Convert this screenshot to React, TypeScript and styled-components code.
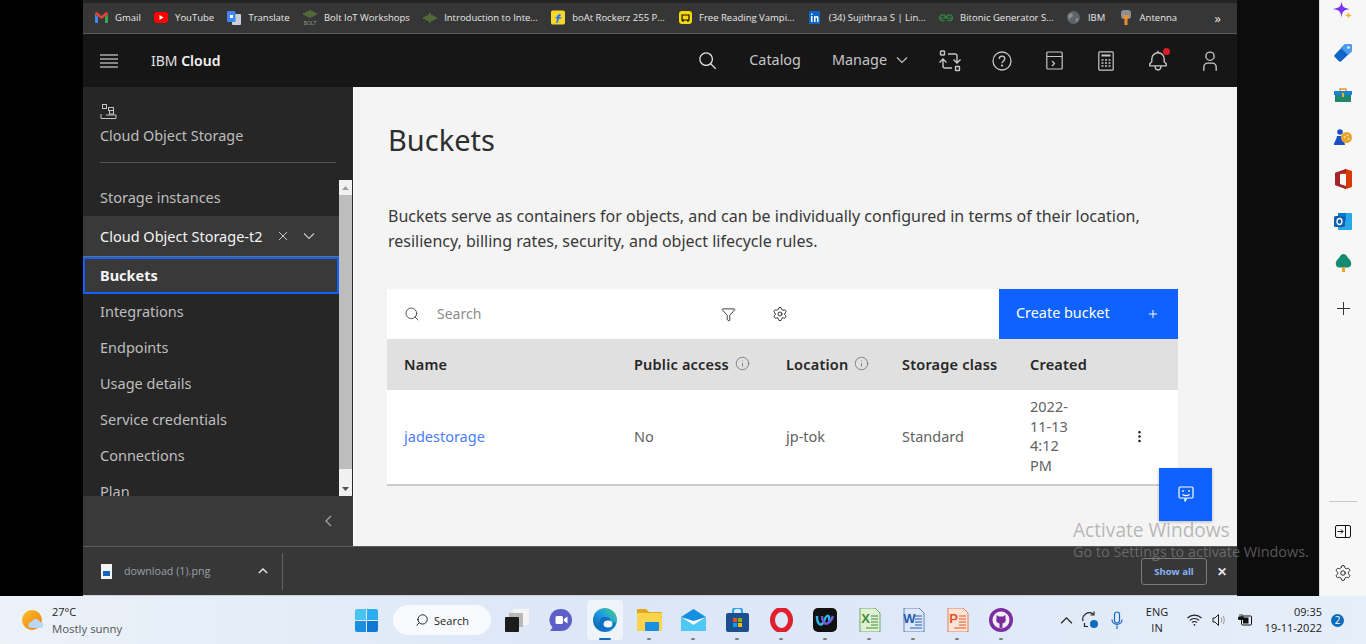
import React from "react";
import styled, { createGlobalStyle } from "styled-components";
import { Filter, Settings, Info, MoreVertical, Search as SearchGlyph } from "lucide-react";

const GlobalStyle = createGlobalStyle`
    html, body {
        margin: 0;
        padding: 0;
        background: #000;
        overflow: hidden;
    }
    * { box-sizing: border-box; }
`;

const PLEX = `"Noto Sans", "Open Sans", sans-serif`;
const SEGOE = `"Open Sans", "Noto Sans", sans-serif`;

/* ---------- carbon style glyphs ---------- */
const Carbon = ({ size = 20, color = "currentColor", d }: { size?: number; color?: string; d: string }) => (
    <svg width={size} height={size} viewBox="0 0 32 32" fill={color}>
        <path d={d} />
    </svg>
);
const SEARCH = "M29 27.59l-7.55-7.55a11 11 0 1 0-1.41 1.41L27.59 29ZM4 13a9 9 0 1 1 9 9A9 9 0 0 1 4 13Z";
const BELL = "M28.71 19.29 26 16.59V13a10 10 0 0 0-9-9.95V1h-2v2.05A10 10 0 0 0 6 13v3.59l-2.71 2.7A1 1 0 0 0 3 20v3a1 1 0 0 0 1 1h7v.78a5.15 5.15 0 0 0 4.5 5.2A5 5 0 0 0 21 25v-1h7a1 1 0 0 0 1-1v-3a1 1 0 0 0-.29-.71ZM19 25a3 3 0 0 1-6 0v-1h6Zm8-3H5v-1.59l2.71-2.7A1 1 0 0 0 8 17v-4a8 8 0 0 1 16 0v4a1 1 0 0 0 .29.71L27 20.41Z";
const USER = "M16 4a5 5 0 1 1-5 5 5 5 0 0 1 5-5m0-2a7 7 0 1 0 7 7 7 7 0 0 0-7-7ZM26 30h-2v-5a5 5 0 0 0-5-5h-6a5 5 0 0 0-5 5v5H6v-5a7 7 0 0 1 7-7h6a7 7 0 0 1 7 7Z";

const Hamburger = () => (
    <svg width="18" height="14" viewBox="0 0 18 14" stroke="#f4f4f4" strokeWidth="1.2">
        <path d="M0 1h18M0 5h18M0 9h18M0 13h18" />
    </svg>
);
const Chevron = ({ size = 12, up = false, color = "#c6c6c6", weight = 1.1 }: { size?: number; up?: boolean; color?: string; weight?: number }) => (
    <svg width={size} height={size} viewBox="0 0 12 12" fill="none" stroke={color} strokeWidth={weight}>
        <path d={up ? "M1 8.5 6 3.5l5 5" : "M1 3.5 6 8.5l5-5"} />
    </svg>
);
const SwitchIcon = () => (
    <svg width="22" height="22" viewBox="0 0 22 22" fill="none" stroke="#c6c6c6" strokeWidth="1.4">
        <rect x="1.5" y="1" width="4" height="4" rx=".6" />
        <rect x="16.5" y="16.5" width="4" height="4" rx=".6" />
        <path d="M9 4h7a2 2 0 0 1 2 2v6M14.5 9.5 18 13l3.5-3.5" />
        <path d="M13 18H6a2 2 0 0 1-2-2v-6M.5 12.5 4 9l3.5 3.5" />
    </svg>
);
const HelpIcon = () => (
    <svg width="20" height="20" viewBox="0 0 20 20" fill="none" stroke="#c6c6c6" strokeWidth="1.3">
        <circle cx="10" cy="10" r="9" />
        <path d="M7.2 8c0-1.7 1.2-2.8 2.8-2.8s2.8 1 2.8 2.5c0 2.2-2.8 2.3-2.8 4.6" />
        <circle cx="10" cy="14.6" r=".5" fill="#c6c6c6" />
    </svg>
);
const TerminalIcon = () => (
    <svg width="17" height="19" viewBox="0 0 17 19" fill="none" stroke="#c6c6c6" strokeWidth="1.2">
        <rect x=".8" y="1" width="15.4" height="17" rx="1" />
        <path d="M1 5.5h15M6 10l2.5 2.5L6 15" />
    </svg>
);
const CalculatorIcon = () => (
    <svg width="16" height="20" viewBox="0 0 16 20" fill="none" stroke="#c6c6c6" strokeWidth="1.2">
        <rect x=".8" y=".8" width="14.4" height="18.4" rx="1" />
        <path d="M3.5 4.5h9" strokeWidth="2" />
        <path d="M3.5 9h2M7 9h2M10.5 9h2M3.5 12h2M7 12h2M10.5 12h2M3.5 15h2M7 15h2M10.5 15h2" strokeWidth="1.4" />
    </svg>
);
const StorageIcon = () => (
    <svg width="17" height="16" viewBox="0 0 17 16" fill="none" stroke="#c6c6c6" strokeWidth="1" style={{ display: "block" }}>
        <rect x="2.5" y=".5" width="4" height="4" />
        <rect x="8.5" y="3.5" width="5" height="3" />
        <rect x="9.5" y="6.5" width="4" height="3.5" />
        <path d="M1 10v4.5h15V11H6" />
    </svg>
);
const FeedbackIcon = () => (
    <svg width="16" height="18" viewBox="0 0 16 18" fill="none" stroke="#fff" strokeWidth="1.2">
        <path d="M2 1h12a1.2 1.2 0 0 1 1 1v9a1.2 1.2 0 0 1-1 1H9l-1 1.5-1 2V12H2a1.2 1.2 0 0 1-1-1V2a1.2 1.2 0 0 1 1-1Z" />
        <path d="M5 4v2M11 4v2M4.5 8.5c2 1.4 5 1.4 7 0" />
    </svg>
);

/* ---------- bookmark favicons ---------- */
const GmailFav = () => (
    <svg width="13" height="11" viewBox="0 0 13 11">
        <path d="M0 2v8a1 1 0 0 0 1 1h2V5Z" fill="#4285f4" />
        <path d="M13 2v8a1 1 0 0 1-1 1h-2V5Z" fill="#34a853" />
        <path d="M0 2c0-1.6 1.5-2.3 2.6-1.4L6.5 4l3.9-3.4C11.5-.3 13 .4 13 2l-6.5 5Z" fill="#ea4335" />
    </svg>
);
const YoutubeFav = () => (
    <svg width="14" height="11" viewBox="0 0 14 11">
        <rect width="14" height="11" rx="3" fill="#f00" />
        <path d="m5.5 3 4 2.5-4 2.5Z" fill="#fff" />
    </svg>
);
const TranslateFav = () => (
    <svg width="14" height="14" viewBox="0 0 14 14">
        <rect x="5" y="3" width="9" height="11" rx="1" fill="#c8d0dc" />
        <rect width="8.5" height="11" rx="1" fill="#4285f4" />
        <rect x="3" y="4" width="3" height="3" fill="#fff" />
    </svg>
);
const WaveFav = () => (
    <svg width="14" height="10" viewBox="0 0 14 10" stroke="#6f9a3c" strokeWidth="1">
        <path d="M1 4v2M3 3v4M5 2v6M7 0v10M9 2v6M11 3v4M13 4v2" />
    </svg>
);
const BoltFav = () => (
    <svg width="14" height="15" viewBox="0 0 14 15">
        <path d="M1 3v2M3 2v4M5 1v6M7 0v8M9 1v6M11 2v4M13 3v2" stroke="#6f9a3c" strokeWidth="1" />
        <text x="7" y="14.5" textAnchor="middle" fontSize="5" fontFamily="Open Sans, sans-serif" fill="#9a9a9a">BOLT</text>
    </svg>
);
const FlipkartFav = () => (
    <svg width="15" height="15" viewBox="0 0 15 15">
        <rect width="15" height="15" rx="2" fill="#f8d72a" />
        <path d="M9 4C7 4 6.5 5.5 6.5 7H5v1.5h1.500L5.500 13h2l1-4.500H11V7H9c0-1 .5-1.500 1.500-1.500V4Z" fill="#2874f0" />
    </svg>
);
const ReadingFav = () => (
    <svg width="13" height="13" viewBox="0 0 13 13">
        <rect width="13" height="13" rx="3" fill="#f5d90a" />
        <path d="M3 4h7v5H3ZM3 10h2M8 10h2" stroke="#111" strokeWidth="1.2" fill="none" />
    </svg>
);
const LinkedinFav = () => (
    <svg width="11" height="13" viewBox="0 0 11 13">
        <rect width="11" height="13" fill="#0a66c2" />
        <path d="M2 5h1.500v6H2ZM2 2.500h1.500V4H2ZM5 5h1.500v1c1-1.500 3-1.200 3 1v4H8V7.500c0-1.300-1.500-1.300-1.500 0V11H5Z" fill="#fff" />
    </svg>
);
const GfgFav = () => (
    <svg width="14" height="8" viewBox="0 0 14 8" fill="none" stroke="#2f8d46" strokeWidth="1.2">
        <path d="M1 4h5.500A3 3 0 1 0 5.500 6M13 4H7.500A3 3 0 1 1 8.500 6" />
    </svg>
);
const GlobeFav = () => (
    <svg width="13" height="13" viewBox="0 0 13 13">
        <circle cx="6.500" cy="6.500" r="6.500" fill="#5f6368" />
        <path d="M3 2c2 0 3 1 3 2.500S3.500 6 3 8 1.500 6 1 5ZM9 7l2.500.5c0 2-1.500 3.500-3 4Z" fill="#8a8d91" />
    </svg>
);
const AntennaFav = () => (
    <svg width="12" height="15" viewBox="0 0 12 15">
        <rect x="1" y="0" width="10" height="9" rx="3" fill="#8a8f98" />
        <path d="M3 5h6v3H7.500v7h-3V8H3Z" fill="#e8912d" />
    </svg>
);

/* ---------- taskbar icons ---------- */
const WeatherIcon = () => (
    <svg width="23" height="23" viewBox="0 0 23 23">
        <defs>
            <linearGradient id="sun" x1="0" y1="0" x2="1" y2="1">
                <stop offset="0" stopColor="#fbbf24" />
                <stop offset="1" stopColor="#f07a14" />
            </linearGradient>
        </defs>
        <circle cx="10" cy="11" r="10" fill="url(#sun)" />
        <path d="M9 19a3 3 0 0 1 .5-6 4.500 4.500 0 0 1 8.500 0 3 3 0 0 1 .5 6Z" fill="#bcd6f2" />
    </svg>
);
const WinLogo = () => (
    <svg width="23" height="23" viewBox="0 0 23 23">
        <path d="M0 2a2 2 0 0 1 2-2h9v11H0Z" fill="#4cc2f1" />
        <path d="M12 0h9a2 2 0 0 1 2 2v9H12Z" fill="#2aaef0" />
        <path d="M0 12h11v11H2a2 2 0 0 1-2-2Z" fill="#1b8fe0" />
        <path d="M12 12h11v9a2 2 0 0 1-2 2h-9Z" fill="#0f78d4" />
    </svg>
);
const TaskView = () => (
    <svg width="24" height="23" viewBox="0 0 24 23">
        <rect x="8" y="0" width="16" height="16" rx="1" fill="#f4f4f4" />
        <rect x="4" y="4" width="14" height="14" fill="#b8b8b8" />
        <rect x="0" y="8" width="14" height="15" rx="1" fill="#1c1c1c" />
    </svg>
);
const TeamsIcon = () => (
    <svg width="24" height="24" viewBox="0 0 24 24">
        <path d="M12 1a11 11 0 0 1 0 22H1l2.500-3.500A11 11 0 0 1 12 1Z" fill="#5b5fc7" />
        <rect x="6.500" y="8" width="7.500" height="8" rx="1.500" fill="#fff" />
        <path d="m15 11 3.500-2.500v7L15 13Z" fill="#fff" />
    </svg>
);
const EdgeIcon = () => (
    <svg width="24" height="24" viewBox="0 0 24 24">
        <defs>
            <linearGradient id="edge" x1="0" y1="1" x2="1" y2="0">
                <stop offset="0" stopColor="#0c59a4" />
                <stop offset=".55" stopColor="#1b9de2" />
                <stop offset="1" stopColor="#4fd67c" />
            </linearGradient>
        </defs>
        <circle cx="12" cy="12" r="12" fill="url(#edge)" />
        <path d="M7 13c0-4 6-5 9-3 2 1.500 1 4 0 4.500H23C21 22 9 26 6 18c-.5-2 0-4 1-5Z" fill="#0d6fc6" />
        <ellipse cx="15" cy="16" rx="4.500" ry="3.500" fill="#f3f7fb" />
    </svg>
);
const FolderIcon = () => (
    <svg width="25" height="22" viewBox="0 0 25 22">
        <path d="M1 0h8l3 3h12a1 1 0 0 1 1 1v3H0V1a1 1 0 0 1 1-1Z" fill="#e0a71a" />
        <rect y="4" width="25" height="18" rx="1" fill="#fcd34d" />
        <rect x="8" y="13" width="14" height="9" rx="1" fill="#1a8fe0" />
    </svg>
);
const MailIcon = () => (
    <svg width="25" height="22" viewBox="0 0 25 22">
        <path d="M0 8 12.500 0 25 8v14H0Z" fill="#1490df" />
        <path d="M0 8l12.500 8L25 8v14H0Z" fill="#50c8f5" />
        <path d="M0 8l12.500 8L25 8 12.500 12Z" fill="#f7fbfe" />
    </svg>
);
const StoreIcon = () => (
    <svg width="23" height="24" viewBox="0 0 23 24">
        <path d="M7 6V3a3 3 0 0 1 3-3h3a3 3 0 0 1 3 3v3" fill="none" stroke="#2aa6e6" strokeWidth="2" />
        <rect y="5" width="23" height="19" rx="2" fill="#1b4f8f" />
        <rect x="7" y="10" width="4" height="4" fill="#f25022" />
        <rect x="12" y="10" width="4" height="4" fill="#7fba00" />
        <rect x="7" y="15" width="4" height="4" fill="#00a4ef" />
        <rect x="12" y="15" width="4" height="4" fill="#ffb900" />
    </svg>
);
const OperaIcon = () => (
    <svg width="23" height="24" viewBox="0 0 23 24">
        <ellipse cx="11.500" cy="12" rx="9" ry="10.500" fill="none" stroke="#e0202f" strokeWidth="5" />
    </svg>
);
const WebexIcon = () => (
    <svg width="24" height="24" viewBox="0 0 24 24">
        <rect width="24" height="24" rx="5" fill="#111" />
        <path d="M4 8c0 9 4 10 6 7s2-6 4-7 3 3 2 6" fill="none" stroke="#2fb5e8" strokeWidth="2.500" />
        <path d="M9 8c0 6 3 9 6 7 2-1 4-4 5-7" fill="none" stroke="#6f5bd8" strokeWidth="2.500" />
    </svg>
);
const OfficeDoc = ({ tint, ink, letter }: { tint: string; ink: string; letter: string }) => (
    <svg width="23" height="24" viewBox="0 0 23 24">
        <path d="M2 0h15l5 5v19H2Z" fill={tint} stroke={ink} strokeWidth=".7" />
        <path d="M13 8h7M13 11h7M13 14h7M13 17h7M8 20h12" stroke={ink} strokeWidth="1.200" />
        <text x="7.500" y="15" textAnchor="middle" fontSize="13" fontWeight="700" fontFamily="Liberation Sans, sans-serif" fill={ink}>{letter}</text>
    </svg>
);
const GithubIcon = () => (
    <svg width="24" height="24" viewBox="0 0 24 24">
        <circle cx="12" cy="12" r="12" fill="#7b2d9e" />
        <circle cx="12" cy="12" r="8.500" fill="#f4edf7" />
        <path d="M7.500 7 10 8.500h4L16.500 7v3.500c1 3-1 4.500-3 5V20h-3v-4.500c-2-.5-4-2-3-5Z" fill="#7b2d9e" />
    </svg>
);
const SyncIcon = () => (
    <svg width="18" height="18" viewBox="0 0 18 18" fill="none" stroke="#222" strokeWidth="1.2">
        <path d="M2 10a6.500 6.500 0 0 1 10-7M13 .5V4H9.500M7 15.500H3.500V12M3.500 15a6.500 6.500 0 0 0 1 .5" />
        <circle cx="13" cy="13" r="4" fill="#0f6cbd" stroke="none" />
    </svg>
);
const MicIcon = () => (
    <svg width="12" height="19" viewBox="0 0 12 19" fill="none" stroke="#1668c4" strokeWidth="1.2">
        <rect x="3.500" y="1" width="5" height="11" rx="2.500" />
        <path d="M1 8.500c0 6.500 10 6.500 10 0M6 14.500V18" />
    </svg>
);
const WifiIcon = () => (
    <svg width="15" height="12" viewBox="0 0 15 12" fill="none" stroke="#222" strokeWidth="1.1">
        <path d="M.5 4a10 10 0 0 1 14 0M2.800 6.300a7 7 0 0 1 9.400 0M5 8.500a4 4 0 0 1 5 0" />
        <circle cx="7.500" cy="10.800" r=".9" fill="#222" stroke="none" />
    </svg>
);
const SpeakerIcon = () => (
    <svg width="15" height="14" viewBox="0 0 15 14" fill="none" stroke="#222" strokeWidth="1">
        <path d="M1 5h2l3.500-3.500v11L3 9H1Z" />
        <path d="M9 4.500c1 1.500 1 3.500 0 5M11 3c1.700 2.500 1.700 5.500 0 8" stroke="#999" />
    </svg>
);
const BatteryIcon = () => (
    <svg width="15" height="13" viewBox="0 0 15 13">
        <path d="M3 0v3M5 0v3M1.500 3h5v2.500h-5Z" stroke="#111" fill="#111" strokeWidth=".8" />
        <rect x="4.500" y="2" width="10" height="9" rx="1" fill="none" stroke="#111" />
        <rect x="6" y="3.500" width="5.500" height="6" fill="#111" />
    </svg>
);

/* ---------- rail icons ---------- */
const Sparkle = () => (
    <svg width="20" height="20" viewBox="0 0 20 20">
        <path d="M8.500 0c.6 5.500 2 7 8 8-6 1-7.400 2.500-8 9-.6-6.500-2-8-8.500-9C6.500 7 8 5.500 8.500 0Z" fill="#7a35f0" />
        <path d="M15.500 11c.2 2 1 3 3.500 3.500-2.500.4-3.300 1.300-3.500 3.500-.2-2.200-1-3.100-3.500-3.500 2.500-.5 3.300-1.500 3.500-3.500Z" fill="#f5b51e" />
    </svg>
);
const TagIcon = () => (
    <svg width="18" height="18" viewBox="0 0 18 18">
        <path d="M11 0h5a2 2 0 0 1 2 2v5L7.500 17a2 2 0 0 1-2.800 0L1 13.300a2 2 0 0 1 0-2.800Z" fill="#1165c8" />
        <path d="M11 0h5a2 2 0 0 1 2 2v5l-4 4-7-7Z" fill="#4f9bef" />
        <circle cx="14.500" cy="3.500" r="1.300" fill="#f7f7f7" />
    </svg>
);
const BagIcon = () => (
    <svg width="18" height="14" viewBox="0 0 18 14">
        <path d="M6 3V1h6v2" fill="none" stroke="#e29a1e" strokeWidth="1.400" />
        <rect y="3" width="18" height="4" fill="#1f7fd6" />
        <rect x="1" y="7" width="16" height="7" fill="#20876f" />
        <rect x="8" y="5" width="2" height="4" fill="#f5b51e" />
    </svg>
);
const GamesIcon = () => (
    <svg width="18" height="18" viewBox="0 0 18 18">
        <circle cx="6" cy="4" r="2.800" fill="#1a4fc9" />
        <path d="M3 8h6l2 9H0c0-3 2-4 3-9Z" fill="#1a4fc9" />
        <circle cx="12.500" cy="9.500" r="5.500" fill="#e8a426" />
        <circle cx="10.500" cy="9" r=".8" fill="#fff" />
        <circle cx="13.500" cy="7.500" r=".8" fill="#fff" />
        <circle cx="14.500" cy="11" r=".8" fill="#fff" />
    </svg>
);
const OfficeIcon = () => (
    <svg width="17" height="20" viewBox="0 0 17 20">
        <path d="M0 4 11 0l6 2v16l-6 2-11-4Z" fill="#d83b01" />
        <path d="M0 4 11 0v3L5 5v10l6 2v3L0 16Z" fill="#a4262c" />
        <path d="M5 5h6v12l-6-2Z" fill="#f7f7f7" />
    </svg>
);
const OutlookIcon = () => (
    <svg width="18" height="18" viewBox="0 0 18 18">
        <path d="M4 1h13a1 1 0 0 1 1 1v15a1 1 0 0 1-1 1H4Z" fill="#28a8ea" />
        <path d="M4 1h8v8H4Z" fill="#0078d4" />
        <rect x="0" y="4" width="11" height="11" rx="1.500" fill="#0f5fb0" />
        <ellipse cx="5.500" cy="9.500" rx="2.500" ry="3" fill="none" stroke="#fff" strokeWidth="1.300" />
    </svg>
);
const TreeIcon = () => (
    <svg width="17" height="18" viewBox="0 0 17 18">
        <path d="M8.500 0c2 0 3.500 2 4.500 4 3 2 5.500 8 0 9.500H4C-1.500 12 1 6 4 4c1-2 2.500-4 4.500-4Z" fill="#138a72" />
        <rect x="7" y="13" width="3" height="5" fill="#e8a426" />
    </svg>
);
const PlusIcon = () => (
    <svg width="13" height="13" viewBox="0 0 13 13" stroke="#333" strokeWidth="1">
        <path d="M6.500 0v13M0 6.500h13" />
    </svg>
);
const PanelIcon = () => (
    <svg width="16" height="13" viewBox="0 0 16 13" fill="none" stroke="#111" strokeWidth="1">
        <rect x=".5" y=".5" width="15" height="12" rx="1.500" />
        <path d="M10.500 .5v12M2.500 6.500H8M6 4.500l2 2-2 2" />
    </svg>
);
const ScrollArrow = ({ up = false }: { up?: boolean }) => (
    <svg width="7" height="4" viewBox="0 0 7 4" fill={up ? "#a0a0a0" : "#505050"}>
        <path d={up ? "M0 4 3.500 0 7 4Z" : "M0 0h7L3.500 4Z"} />
    </svg>
);

/* ---------- layout ---------- */
const Screen = styled.div`
    width: 1366px;
    height: 644px;
    display: flex;
    flex-direction: column;
    position: relative;
    overflow: hidden;
    background: #000;
`;
const Desktop = styled.div`
    height: 596px;
    display: flex;
`;
const Margin = styled.div<{ $w: number; $bg: string }>`
    width: ${p => p.$w}px;
    background: ${p => p.$bg};
`;
const Browser = styled.div`
    width: 1154px;
    display: flex;
    flex-direction: column;
    position: relative;
`;

const Bookmarks = styled.div`
    height: 34px;
    background: #363636;
    border-top: 3px solid #232428;
    border-bottom: 1px solid #5a5a5a;
    display: flex;
    align-items: center;
    gap: 13.3px;
    padding: 0 0 1px 11px;
    font-family: ${SEGOE};
    font-size: 9.5px;
    color: #e8e8e8;
`;
const Bookmark = styled.div`
    display: flex;
    align-items: center;
    gap: 7px;
    white-space: nowrap;
`;
const FavSlot = styled.span`
    width: 14px;
    display: flex;
    justify-content: center;
`;
const MoreMarks = styled.span`
    margin-left: 24px;
    font-size: 13px;
`;

const Header = styled.header`
    height: 53px;
    background: #161616;
    display: flex;
    align-items: center;
    padding-left: 17px;
    font-family: ${PLEX};
    color: #c6c6c6;
`;
const Brand = styled.div`
    margin-left: 33px;
    padding-bottom: 1px;
    font-size: 14px;
    color: #e0e0e0;
    b {
        font-weight: 600;
        color: #f4f4f4;
    }
`;
const HeaderRight = styled.div`
    margin-left: auto;
    display: flex;
    align-items: center;
    padding-right: 1px;
`;
const HeaderIcon = styled.div`
    width: 52px;
    height: 52px;
    display: flex;
    align-items: center;
    justify-content: center;
    position: relative;
`;
const RedDot = styled.span`
    position: absolute;
    top: 13px;
    right: 14px;
    width: 7px;
    height: 7px;
    border-radius: 50%;
    background: #da1e28;
`;
const HeaderLink = styled.div`
    padding: 0 16px 2px 15px;
    font-size: 14.4px;
    display: flex;
    align-items: center;
    gap: 8px;
    svg { margin-left: 1px; }
`;

const Body = styled.div`
    flex: 1;
    min-height: 0;
    display: flex;
`;
const Sidebar = styled.aside`
    width: 270px;
    background: #262626;
    display: flex;
    flex-direction: column;
    font-family: ${PLEX};
    color: #bebebe;
`;
const SideTop = styled.div`
    height: 93px;
    padding: 17px 17px 0;
`;
const SideTitle = styled.div`
    font-size: 14.4px;
    line-height: 20px;
    margin-top: 6px;
    padding-bottom: 16px;
    border-bottom: 1px solid #525252;
`;
const SideMiddle = styled.div`
    flex: 1;
    min-height: 0;
    display: flex;
`;
const NavList = styled.nav`
    flex: 1;
    overflow: hidden;
    font-size: 14.5px;
`;
const NavItem = styled.div`
    height: 36px;
    line-height: 34px;
    padding-left: 17px;
`;
const OpenItem = styled.div`
    height: 41px;
    background: #393939;
    color: #f4f4f4;
    display: flex;
    align-items: center;
    padding: 0 24px 0 17px;
    justify-content: space-between;
    border-bottom: 1px solid #6f6f6f;
`;
const OpenActions = styled.span`
    display: flex;
    align-items: center;
    gap: 15px;
`;
const ActiveItem = styled.div`
    height: 37px;
    background: #393939;
    border: 2px solid #0f62fe;
    color: #f4f4f4;
    font-weight: 700;
    display: flex;
    align-items: center;
    padding: 0 0 2px 15px;
`;
const Scrollbar = styled.div`
    width: 13px;
    background: #f1f1f1;
    display: flex;
    flex-direction: column;
    align-items: center;
    margin-right: 1px;
    justify-content: space-between;
`;
const ScrollCap = styled.div`
    height: 15px;
    display: flex;
    align-items: center;
    justify-content: center;
`;
const ScrollThumb = styled.div`
    flex: 1;
    width: 100%;
    background: #bdbdbd;
    margin-bottom: 12px;
`;
const SideFooter = styled.div`
    height: 50px;
    background: #393939;
    display: flex;
    align-items: center;
    justify-content: flex-end;
    padding-right: 21px;
`;

const Main = styled.main`
    flex: 1;
    background: #f4f4f4;
    padding: 0 59px 0 33px;
    font-family: ${PLEX};
    border-left: 1px solid #fff;
    color: #262626;
`;
const Title = styled.h1`
    margin: 31px 0 0 1px;
    font-size: 29px;
    font-weight: 400;
    line-height: 44px;
    color: #2e2e2e;
`;
const Description = styled.p`
    margin: 42px 0 0 1px;
    font-size: 16px;
    line-height: 25px;
    white-space: nowrap;
    color: #393939;
`;
const Table = styled.section`
    margin-top: 35px;
    background: #fff;
    border-bottom: 2px solid #ccc;
`;
const Toolbar = styled.div`
    height: 50px;
    display: flex;
    align-items: center;
    padding-left: 17px;
    background: #fff;
    color: #525252;
`;
const SearchLabel = styled.span`
    margin-left: 17px;
    padding-bottom: 2px;
    font-size: 14px;
    color: #8d8d8d;
`;
const ToolIcon = styled.span<{ $ml: number }>`
    margin-left: ${p => p.$ml}px;
    display: flex;
    color: #262626;
`;
const CreateButton = styled.button`
    margin-left: auto;
    width: 179px;
    height: 50px;
    border: none;
    background: #0f62fe;
    color: #fff;
    font-family: inherit;
    font-size: 14.4px;
    display: flex;
    align-items: center;
    justify-content: space-between;
    padding: 0 20px 4px 17px;
    svg { margin-top: 3px; }
`;
const Row = styled.div<{ $head?: boolean }>`
    display: grid;
    grid-template-columns: 230px 152px 116px 128px 1fr;
    align-items: center;
    height: ${p => (p.$head ? 51 : 94)}px;
    padding: 0 0 2px 17px;
    font-size: 14.5px;
    background: ${p => (p.$head ? "#e0e0e0" : "#fff")};
    color: ${p => (p.$head ? "#161616" : "#626262")};
    font-weight: ${p => (p.$head ? 600 : 400)};
`;
const HeadCell = styled.span`
    display: flex;
    align-items: center;
    gap: 6px;
    white-space: nowrap;
    color: #262626;
    letter-spacing: 0.2px;
    svg { color: #6f6f6f; }
`;
const BucketLink = styled.a`
    color: #4a7dff;
`;
const CreatedCell = styled.div`
    display: flex;
    align-items: center;
    line-height: 19.5px;
`;
const DateText = styled.span`
    width: 102px;
`;
const FeedbackButton = styled.div`
    position: absolute;
    left: 1076px;
    top: 468px;
    width: 53px;
    height: 53px;
    background: #0f62fe;
    display: flex;
    align-items: center;
    justify-content: center;
    box-shadow: 0 1px 3px rgba(0, 0, 0, 0.25);
`;

const DownloadBar = styled.div`
    height: 50px;
    background: #373737;
    border-top: 1px solid #5a5a5a;
    border-bottom: 1px solid #cfd2d6;
    display: flex;
    align-items: center;
    font-family: ${SEGOE};
    color: #9aa0a6;
    font-size: 10.7px;
    padding-left: 18px;
`;
const FileChip = styled.span`
    width: 11px;
    height: 15px;
    background: #f1f3f4;
    display: flex;
    align-items: flex-end;
    justify-content: center;
    padding-bottom: 3px;
    &::after {
        content: "";
        width: 7px;
        height: 5px;
        background: #1565c0;
    }
`;
const FileName = styled.span`
    margin-left: 12px;
    width: 134px;
`;
const ChipDivider = styled.span`
    width: 1px;
    height: 37px;
    margin-left: 14px;
    background: #5f6368;
`;
const ShowAll = styled.button`
    margin-left: auto;
    width: 66px;
    height: 27px;
    background: transparent;
    border: 1px solid #7b7b7b;
    border-radius: 3px;
    color: #8ab4f8;
    font-family: inherit;
    font-size: 9.5px;
    font-weight: 700;
    padding: 0;
`;
const CloseDownloads = styled.span`
    width: 30px;
    text-align: center;
    color: #e8eaed;
    font-size: 12px;
    font-weight: 700;
`;

const Rail = styled.aside`
    width: 47px;
    background: #f7f7f7;
    border-left: 1px solid #dcdcdc;
    display: flex;
    flex-direction: column;
    align-items: center;
    padding: 1px 0 13px;
    gap: 22px;
`;
const RailIcon = styled.div<{ $drop?: number }>`
    height: 20px;
    margin-top: ${p => p.$drop ?? 0}px;
    display: flex;
    align-items: center;
    justify-content: center;
`;
const RailBottom = styled.div`
    margin-top: auto;
    display: flex;
    flex-direction: column;
    align-items: center;
    gap: 22px;
    color: #222;
`;
const RailDivider = styled.div`
    width: 28px;
    height: 1px;
    background: #c8c8c8;
    margin-bottom: -3px;
`;

const Watermark = styled.div`
    position: absolute;
    left: 1073px;
    top: 518px;
    font-family: ${SEGOE};
    color: rgba(140, 140, 140, 0.6);
    pointer-events: none;
    white-space: nowrap;
`;
const WatermarkBig = styled.div`
    font-size: 19.1px;
    line-height: 24px;
`;
const WatermarkSmall = styled.div`
    font-size: 14.4px;
    line-height: 20px;
`;

const Taskbar = styled.footer`
    height: 48px;
    background: linear-gradient(90deg, #ecf2f8 0%, #dbe6f7 45%, #dfe9f8 70%, #e6eef9 100%);
    display: flex;
    align-items: center;
    font-family: ${SEGOE};
    color: #1c1c1c;
`;
const Weather = styled.div`
    width: 344px;
    padding-left: 22px;
    display: flex;
    align-items: center;
    gap: 7px;
    font-size: 11px;
    line-height: 17px;
`;
const WeatherSub = styled.div`
    color: #555;
    font-size: 11.4px;
`;
const TaskSlot = styled.div<{ $active?: boolean }>`
    width: ${p => (p.$active ? 36 : 44)}px;
    margin: 0 ${p => (p.$active ? 4 : 0)}px;
    height: 40px;
    display: flex;
    align-items: center;
    justify-content: center;
    position: relative;
    border-radius: 4px;
    background: ${p => (p.$active ? "rgba(255,255,255,.55)" : "transparent")};
`;
const RunDot = styled.span<{ $active?: boolean }>`
    position: absolute;
    bottom: 0;
    left: 50%;
    transform: translateX(-50%);
    width: ${p => (p.$active ? 12 : 4)}px;
    height: 2.5px;
    border-radius: 2px;
    background: ${p => (p.$active ? "#0f6cbd" : "#7d7d7d")};
`;
const SearchPill = styled.div`
    width: 98px;
    height: 30px;
    margin: 0 4px 0 5px;
    border-radius: 15px;
    background: #f8fafd;
    display: flex;
    align-items: center;
    justify-content: center;
    gap: 5px;
    font-size: 11px;
`;
const Tray = styled.div`
    margin-left: 31px;
    display: flex;
    align-items: center;
`;
const TrayIcon = styled.span<{ $w: number; $ml?: number }>`
    width: ${p => p.$w}px;
    margin-left: ${p => p.$ml ?? 0}px;
    display: flex;
    justify-content: center;
`;
const Lang = styled.div`
    width: 40px;
    margin-left: 5px;
    text-align: center;
    font-size: 11px;
    line-height: 16px;
`;
const Clock = styled.div`
    width: 65px;
    text-align: right;
    font-size: 11px;
    line-height: 16px;
    white-space: nowrap;
`;
const Badge = styled.span`
    width: 13px;
    height: 13px;
    margin-left: 9px;
    border-radius: 50%;
    background: #0f6cbd;
    color: #fff;
    font-size: 10px;
    line-height: 13px;
    text-align: center;
`;

const bookmarks: [React.ReactNode, string][] = [
    [<GmailFav />, "Gmail"],
    [<YoutubeFav />, "YouTube"],
    [<TranslateFav />, "Translate"],
    [<BoltFav />, "Bolt IoT Workshops"],
    [<WaveFav />, "Introduction to Inte..."],
    [<FlipkartFav />, "boAt Rockerz 255 P..."],
    [<ReadingFav />, "Free Reading Vampi..."],
    [<LinkedinFav />, "(34) Sujithraa S | Lin..."],
    [<GfgFav />, "Bitonic Generator S..."],
    [<GlobeFav />, "IBM"],
    [<AntennaFav />, "Antenna"],
];

const taskApps: React.ReactNode[] = [
    <FolderIcon />,
    <MailIcon />,
    <StoreIcon />,
    <OperaIcon />,
    <WebexIcon />,
    <OfficeDoc tint="#dff0d4" ink="#3f8f35" letter="X" />,
    <OfficeDoc tint="#dce7f7" ink="#2b5cab" letter="W" />,
    <OfficeDoc tint="#fde3d6" ink="#e0552a" letter="P" />,
    <GithubIcon />,
];

const App = () => {
    return (
        <Screen>
            <GlobalStyle />
            <Desktop>
                <Margin $w={83} $bg="#000" />
                <Browser>
                    <Bookmarks>
                        {bookmarks.map(([icon, label]) => (
                            <Bookmark key={label}>
                                <FavSlot>{icon}</FavSlot>
                                {label}
                            </Bookmark>
                        ))}
                        <MoreMarks>»</MoreMarks>
                    </Bookmarks>
                    <Header>
                        <Hamburger />
                        <Brand>
                            IBM <b>Cloud</b>
                        </Brand>
                        <HeaderRight>
                            <HeaderIcon>
                                <Carbon d={SEARCH} size={20} color="#e0e0e0" />
                            </HeaderIcon>
                            <HeaderLink>Catalog</HeaderLink>
                            <HeaderLink>
                                Manage <Chevron />
                            </HeaderLink>
                            <HeaderIcon>
                                <SwitchIcon />
                            </HeaderIcon>
                            <HeaderIcon>
                                <HelpIcon />
                            </HeaderIcon>
                            <HeaderIcon>
                                <TerminalIcon />
                            </HeaderIcon>
                            <HeaderIcon>
                                <CalculatorIcon />
                            </HeaderIcon>
                            <HeaderIcon>
                                <Carbon d={BELL} size={22} color="#c6c6c6" />
                                <RedDot />
                            </HeaderIcon>
                            <HeaderIcon>
                                <Carbon d={USER} size={22} color="#c6c6c6" />
                            </HeaderIcon>
                        </HeaderRight>
                    </Header>
                    <Body>
                        <Sidebar>
                            <SideTop>
                                <StorageIcon />
                                <SideTitle>Cloud Object Storage</SideTitle>
                            </SideTop>
                            <SideMiddle>
                                <NavList>
                                    <NavItem>Storage instances</NavItem>
                                    <OpenItem>
                                        Cloud Object Storage-t2
                                        <OpenActions>
                                            <svg width="10" height="10" viewBox="0 0 10 10" stroke="#c6c6c6" strokeWidth="1">
                                                <path d="M1 1l8 8M9 1l-8 8" />
                                            </svg>
                                            <Chevron />
                                        </OpenActions>
                                    </OpenItem>
                                    <ActiveItem>Buckets</ActiveItem>
                                    <NavItem>Integrations</NavItem>
                                    <NavItem>Endpoints</NavItem>
                                    <NavItem>Usage details</NavItem>
                                    <NavItem>Service credentials</NavItem>
                                    <NavItem>Connections</NavItem>
                                    <NavItem>Plan</NavItem>
                                </NavList>
                                <Scrollbar>
                                    <ScrollCap>
                                        <ScrollArrow up />
                                    </ScrollCap>
                                    <ScrollThumb />
                                    <ScrollCap>
                                        <ScrollArrow />
                                    </ScrollCap>
                                </Scrollbar>
                            </SideMiddle>
                            <SideFooter>
                                <svg width="8" height="12" viewBox="0 0 8 12" fill="none" stroke="#a8a8a8" strokeWidth="1.2">
                                    <path d="M7 1 2 6l5 5" />
                                </svg>
                            </SideFooter>
                        </Sidebar>
                        <Main>
                            <Title>Buckets</Title>
                            <Description>
                                Buckets serve as containers for objects, and can be individually configured in terms of their location,
                                <br />
                                resiliency, billing rates, security, and object lifecycle rules.
                            </Description>
                            <Table>
                                <Toolbar>
                                    <SearchGlyph size={16} strokeWidth={1.5} />
                                    <SearchLabel>Search</SearchLabel>
                                    <ToolIcon $ml={240}>
                                        <Filter size={15} strokeWidth={1.4} />
                                    </ToolIcon>
                                    <ToolIcon $ml={36}>
                                        <Settings size={16} strokeWidth={1.4} />
                                    </ToolIcon>
                                    <CreateButton>
                                        Create bucket
                                        <svg width="10" height="10" viewBox="0 0 10 10" stroke="#fff" strokeWidth="1">
                                            <path d="M5 1v8M1 5h8" />
                                        </svg>
                                    </CreateButton>
                                </Toolbar>
                                <Row $head>
                                    <HeadCell>Name</HeadCell>
                                    <HeadCell>
                                        Public access <Info size={15} strokeWidth={1.3} />
                                    </HeadCell>
                                    <HeadCell>
                                        Location <Info size={15} strokeWidth={1.3} />
                                    </HeadCell>
                                    <HeadCell>Storage class</HeadCell>
                                    <HeadCell>Created</HeadCell>
                                </Row>
                                <Row>
                                    <BucketLink>jadestorage</BucketLink>
                                    <span>No</span>
                                    <span>jp-tok</span>
                                    <span>Standard</span>
                                    <CreatedCell>
                                        <DateText>
                                            2022-
                                            <br />
                                            11-13
                                            <br />
                                            4:12
                                            <br />
                                            PM
                                        </DateText>
                                        <MoreVertical size={15} color="#161616" strokeWidth={2} />
                                    </CreatedCell>
                                </Row>
                            </Table>
                        </Main>
                    </Body>
                    <DownloadBar>
                        <FileChip />
                        <FileName>download (1).png</FileName>
                        <Chevron size={10} up color="#e8eaed" weight={1.6} />
                        <ChipDivider />
                        <ShowAll>Show all</ShowAll>
                        <CloseDownloads>✕</CloseDownloads>
                    </DownloadBar>
                    <FeedbackButton>
                        <FeedbackIcon />
                    </FeedbackButton>
                </Browser>
                <Margin $w={82} $bg="#0c0c0c" />
                <Rail>
                    <RailIcon>
                        <Sparkle />
                    </RailIcon>
                    <RailIcon>
                        <TagIcon />
                    </RailIcon>
                    <RailIcon>
                        <BagIcon />
                    </RailIcon>
                    <RailIcon>
                        <GamesIcon />
                    </RailIcon>
                    <RailIcon>
                        <OfficeIcon />
                    </RailIcon>
                    <RailIcon>
                        <OutlookIcon />
                    </RailIcon>
                    <RailIcon>
                        <TreeIcon />
                    </RailIcon>
                    <RailIcon $drop={3}>
                        <PlusIcon />
                    </RailIcon>
                    <RailBottom>
                        <RailDivider />
                        <RailIcon>
                            <PanelIcon />
                        </RailIcon>
                        <RailIcon>
                            <Settings size={18} strokeWidth={1.3} />
                        </RailIcon>
                    </RailBottom>
                </Rail>
            </Desktop>
            <Taskbar>
                <Weather>
                    <WeatherIcon />
                    <div>
                        <div>27°C</div>
                        <WeatherSub>Mostly sunny</WeatherSub>
                    </div>
                </Weather>
                <TaskSlot>
                    <WinLogo />
                </TaskSlot>
                <SearchPill>
                    <SearchGlyph size={14} strokeWidth={1.6} style={{ transform: "scaleX(-1)" }} />
                    Search
                </SearchPill>
                <TaskSlot>
                    <TaskView />
                </TaskSlot>
                <TaskSlot>
                    <TeamsIcon />
                </TaskSlot>
                <TaskSlot $active>
                    <EdgeIcon />
                    <RunDot $active />
                </TaskSlot>
                {taskApps.map((icon, i) => (
                    <TaskSlot key={i}>
                        {icon}
                        <RunDot />
                    </TaskSlot>
                ))}
                <Tray>
                    <TrayIcon $w={24}>
                        <Chevron size={13} up color="#222" />
                    </TrayIcon>
                    <TrayIcon $w={24}>
                        <SyncIcon />
                    </TrayIcon>
                    <TrayIcon $w={30}>
                        <MicIcon />
                    </TrayIcon>
                    <Lang>
                        ENG
                        <br />
                        IN
                    </Lang>
                    <TrayIcon $w={26} $ml={4}>
                        <WifiIcon />
                    </TrayIcon>
                    <TrayIcon $w={24}>
                        <SpeakerIcon />
                    </TrayIcon>
                    <TrayIcon $w={26}>
                        <BatteryIcon />
                    </TrayIcon>
                    <Clock>
                        09:35
                        <br />
                        19-11-2022
                    </Clock>
                    <Badge>2</Badge>
                </Tray>
            </Taskbar>
            <Watermark>
                <WatermarkBig>Activate Windows</WatermarkBig>
                <WatermarkSmall>Go to Settings to activate Windows.</WatermarkSmall>
            </Watermark>
        </Screen>
    );
};

export default App;
